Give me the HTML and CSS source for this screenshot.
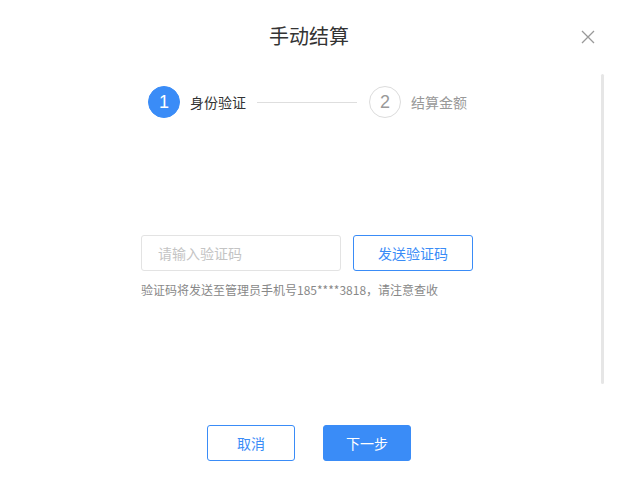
FILE: index.html
```html
<!DOCTYPE html>
<html lang="zh-CN">
<head>
<meta charset="utf-8">
<title>手动结算</title>
<link rel="stylesheet" href="styles.css">
</head>
<body>
<div class="dialog">
  <div class="dialog-header">
    <h1 class="dialog-title">手动结算</h1>
    <button class="close-btn" aria-label="关闭">
      <svg width="14" height="14" viewBox="0 0 14 14"><path d="M1 1L13 13M13 1L1 13" stroke="#999" stroke-width="1.3" fill="none"/></svg>
    </button>
  </div>
  <div class="dialog-body">
    <div class="steps">
      <div class="step active">
        <span class="step-num">1</span>
        <span class="step-label">身份验证</span>
      </div>
      <div class="step-line"></div>
      <div class="step">
        <span class="step-num">2</span>
        <span class="step-label">结算金额</span>
      </div>
    </div>
    <div class="verify">
      <div class="verify-row">
        <input class="code-input" type="text" placeholder="请输入验证码">
        <button class="send-btn">发送验证码</button>
      </div>
      <p class="hint">验证码将发送至管理员手机号185****3818，请注意查收</p>
    </div>
  </div>
  <div class="dialog-footer">
    <button class="btn btn-default">取消</button>
    <button class="btn btn-primary">下一步</button>
  </div>
  <div class="scrollbar"></div>
</div>
</body>
</html>
```

FILE: styles.css
```css
* { box-sizing: border-box; }
html, body {
  margin: 0;
  padding: 0;
  background: #fff;
}
body {
  font-family: "Noto Sans CJK SC", "Noto Sans", sans-serif;
  color: #333;
}
.dialog {
  position: relative;
  width: 617px;
  height: 488px;
  background: #fff;
}
.dialog-header {
  padding-top: 24px;
  text-align: center;
}
.dialog-title {
  margin: 0;
  font-size: 20px;
  line-height: 24px;
  font-weight: 400;
  color: #333;
  padding-left: 1px;
}
.close-btn {
  position: absolute;
  top: 30px;
  right: 22px;
  width: 14px;
  height: 14px;
  padding: 0;
  border: 0;
  background: none;
  display: flex;
}
.dialog-body {
  padding-top: 38px;
}
.steps {
  display: flex;
  align-items: center;
  padding-left: 148px;
  height: 32px;
}
.step {
  display: flex;
  align-items: center;
}
.step-num {
  width: 32px;
  height: 32px;
  border-radius: 50%;
  border: 1px solid #dcdcdc;
  color: #999;
  font-family: "Liberation Sans", Arial, sans-serif;
  font-size: 18px;
  display: flex;
  align-items: center;
  justify-content: center;
  background: #fff;
}
.step-label {
  margin-left: 10px;
  font-size: 14px;
  color: #999;
}
.step.active .step-num {
  background: #3a8cf7;
  border-color: #3a8cf7;
  color: #fff;
}
.step.active .step-label {
  color: #333;
}
.step-line {
  width: 100px;
  height: 1px;
  background: #dedede;
  margin: 0 12px 0 11px;
}
.verify {
  margin-top: 117px;
  padding-left: 141px;
}
.verify-row {
  display: flex;
  gap: 12px;
}
.code-input {
  width: 200px;
  height: 36px;
  border: 1px solid #e3e3e3;
  border-radius: 3px;
  padding: 0 16px;
  font-family: inherit;
  font-size: 14px;
  color: #333;
  outline: none;
}
.code-input::placeholder {
  color: #c4c4c4;
}
.send-btn {
  width: 120px;
  height: 36px;
  border: 1px solid #3a8cf7;
  border-radius: 3px;
  background: #fff;
  color: #3a8cf7;
  font-family: inherit;
  font-size: 14px;
  padding: 0;
}
.hint {
  margin: 10px 0 0;
  font-size: 12px;
  line-height: 18px;
  color: #888;
}
.dialog-footer {
  margin-top: 126px;
  display: flex;
  justify-content: center;
  gap: 28px;
  padding-left: 1px;
}
.btn {
  width: 88px;
  height: 36px;
  border-radius: 3px;
  font-family: inherit;
  font-size: 14px;
  padding: 0;
}
.btn-default {
  background: #fff;
  border: 1px solid #3a8cf7;
  color: #3a8cf7;
}
.btn-primary {
  background: #3a8cf7;
  border: 1px solid #3a8cf7;
  color: #fff;
}
.scrollbar {
  position: absolute;
  top: 74px;
  left: 601px;
  width: 3px;
  height: 310px;
  background: #e6e6e6;
  border-radius: 2px;
}
```
